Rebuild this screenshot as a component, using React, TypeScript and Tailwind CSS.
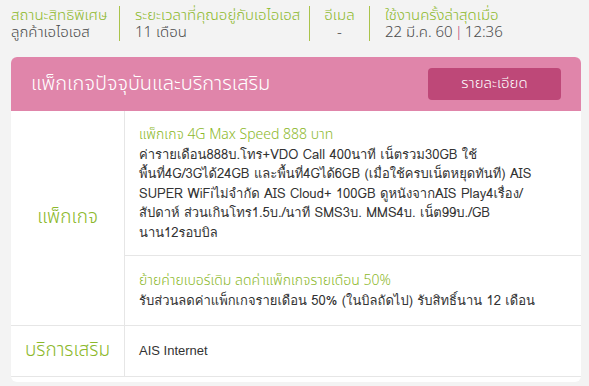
const head = "font-['Noto_Sans_Thai','Noto_Sans','Liberation_Sans',sans-serif] font-light";
const body = "font-['Tahoma','Loma','Noto_Sans_Thai_Looped','Noto_Sans_Thai','Liberation_Sans',sans-serif] font-normal";

const info = [
  { label: 'สถานะสิทธิพิเศษ', value: 'ลูกค้าเอไอเอส', cls: 'w-[108px]' },
  { label: 'ระยะเวลาที่คุณอยู่กับเอไอเอส', value: '11 เดือน', cls: 'w-[190px] border-l pl-[15px]' },
  { label: 'อีเมล', value: '-', cls: 'w-[60px] border-l text-center' },
];

export default function App() {
  return (
    <div className={`w-[589px] h-[386px] overflow-hidden bg-[#f3f3f3] ${head}`}>
      <div className="flex pl-[11px] pt-[6px] text-[15px] leading-[17px]">
        {info.map((c) => (
          <div key={c.label} className={`${c.cls} border-[#a9c34a] h-[35px] pt-[1px]`}>
            <p className="text-[#8cb82a]">{c.label}</p>
            <p className="text-[#4a4a4a]">{c.value}</p>
          </div>
        ))}
        <div className="border-l border-[#a9c34a] h-[35px] pl-[15px] pt-[1px]">
          <p className="text-[#8cb82a]">ใช้งานครั้งล่าสุดเมื่อ</p>
          <p className="text-[#4a4a4a]">
            22 มี.ค. 60<span className="text-[#c04a7b] px-[2px]">|</span>12:36
          </p>
        </div>
      </div>

      <div className="ml-[11px] mt-[16px] w-[570px] rounded-md bg-white overflow-hidden pb-[5px]">
        <div className="flex items-center justify-between h-[54px] bg-[#e085aa] pl-[20px] pr-[20px]">
          <h2 className="text-white text-[20px]">แพ็กเกจปัจจุบันและบริการเสริม</h2>
          <button className="w-[133px] h-[32px] rounded bg-[#be4878] text-white text-[15px]">รายละเอียด</button>
        </div>

        <div className="grid grid-cols-[114px_1fr] border-b border-[#e6e6e6]">
          <div className="flex items-center justify-center border-r border-[#e6e6e6] text-[#8cb82a] text-[19px]">
            แพ็กเกจ
          </div>
          <div>
            <div className={`pl-[14px] pt-[14px] pb-[13px] border-b border-[#e6e6e6] text-[13px] leading-[19.5px] ${body}`}>
              <p className={`text-[#8cb82a] text-[14px] ${head}`}>แพ็กเกจ 4G Max Speed 888 บาท</p>
              <p className="text-[#333]">
                ค่ารายเดือน888บ.โทร+VDO Call 400นาที เน็ตรวม30GB ใช้<br />
                พื้นที่4G/3Gได้24GB และพื้นที่4Gได้6GB (เมื่อใช้ครบเน็ตหยุดทันที) AIS<br />
                SUPER WiFiไม่จำกัด AIS Cloud+ 100GB ดูหนังจากAIS Play4เรื่อง/<br />
                สัปดาห์ ส่วนเกินโทร1.5บ./นาที SMS3บ. MMS4บ. เน็ต99บ./GB<br />
                นาน12รอบบิล
              </p>
            </div>
            <div className={`pl-[14px] py-[15px] text-[13px] leading-[19.5px] ${body}`}>
              <p className={`text-[#8cb82a] text-[14px] ${head}`}>ย้ายค่ายเบอร์เดิม ลดค่าแพ็กเกจรายเดือน 50%</p>
              <p className="text-[#333]">รับส่วนลดค่าแพ็กเกจรายเดือน 50% (ในบิลถัดไป) รับสิทธิ์นาน 12 เดือน</p>
            </div>
          </div>
        </div>

        <div className="grid grid-cols-[114px_1fr] h-[51px] border-b border-[#e6e6e6]">
          <div className="flex items-center justify-center border-r border-[#e6e6e6] text-[#8cb82a] text-[19px]">
            บริการเสริม
          </div>
          <div className="flex items-center pl-[14px] text-[13px] text-[#333] font-normal font-['Liberation_Sans',sans-serif]">
            AIS Internet
          </div>
        </div>
      </div>
    </div>
  );
}
